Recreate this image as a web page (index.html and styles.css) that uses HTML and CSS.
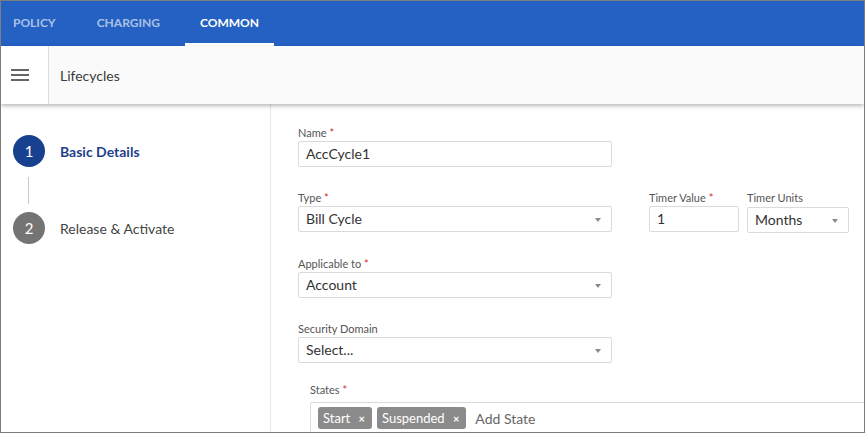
FILE: index.html
```html
<!DOCTYPE html>
<html>
<head>
<meta charset="utf-8">
<link rel="stylesheet" href="styles.css">
</head>
<body>
<div class="frame">
  <header class="topbar">
    <nav class="tabs">
      <div class="tab tab-first">POLICY</div>
      <div class="tab">CHARGING</div>
      <div class="tab active">COMMON</div>
    </nav>
  </header>
  <div class="subbar">
    <div class="menu-btn">
      <span></span><span></span><span></span>
    </div>
    <div class="page-title">Lifecycles</div>
  </div>
  <div class="main">
    <aside class="steps">
      <div class="step">
        <div class="circle current">1</div>
        <div class="step-label current">Basic Details</div>
      </div>
      <div class="connector"></div>
      <div class="step">
        <div class="circle">2</div>
        <div class="step-label">Release &amp; Activate</div>
      </div>
    </aside>
    <section class="form">
      <div class="field w-main">
        <label class="lbl">Name <span class="req">*</span></label>
        <div class="input">AccCycle1</div>
      </div>
      <div class="row">
        <div class="field w-main">
          <label class="lbl">Type <span class="req">*</span></label>
          <div class="input select">Bill Cycle<i class="caret"></i></div>
        </div>
        <div class="field w-timer">
          <label class="lbl">Timer Value <span class="req">*</span></label>
          <div class="input">1</div>
        </div>
        <div class="field w-units">
          <label class="lbl">Timer Units</label>
          <div class="input select units">Months<i class="caret"></i></div>
        </div>
      </div>
      <div class="field w-main">
        <label class="lbl">Applicable to <span class="req">*</span></label>
        <div class="input select">Account<i class="caret"></i></div>
      </div>
      <div class="field w-main">
        <label class="lbl">Security Domain</label>
        <div class="input select">Select...<i class="caret"></i></div>
      </div>
      <div class="field states">
        <label class="lbl">States <span class="req">*</span></label>
        <div class="tags-input">
          <span class="chip">Start <b class="x">×</b></span>
          <span class="chip">Suspended <b class="x">×</b></span>
          <span class="placeholder">Add State</span>
        </div>
      </div>
    </section>
  </div>
</div>
</body>
</html>
```

FILE: styles.css
```css
* { box-sizing: border-box; }
html, body { margin: 0; padding: 0; background: #fff; }
body { font-family: Lato, "Noto Sans", sans-serif; color: #333; }

.frame {
  width: 865px;
  height: 433px;
  border: 1px solid #7d7d7d;
  overflow: hidden;
  display: flex;
  flex-direction: column;
  background: #fff;
}

.topbar {
  height: 45px;
  flex: none;
  background: #2461c2;
}
.tabs { display: flex; height: 100%; }
.tab {
  padding: 0 16px;
  height: 100%;
  display: flex;
  align-items: center;
  font-size: 12px;
  font-weight: 700;
  color: rgba(255,255,255,0.62);
  border-bottom: 3px solid transparent;
  margin-right: 9px;
}
.tab-first { padding-left: 12px; }
.tab.active { color: #fff; border-bottom-color: #fff; padding: 0 15px; }

.subbar {
  height: 58px;
  flex: none;
  display: flex;
  background: #fafafa;
  box-shadow: 0 2px 4px rgba(0,0,0,0.28);
  position: relative;
  z-index: 1;
}
.menu-btn {
  width: 48px;
  background: #fff;
  border-right: 1px solid #dcdcdc;
  display: flex;
  flex-direction: column;
  justify-content: center;
  align-items: flex-start;
  gap: 3px;
  padding-left: 10px;
}
.menu-btn span {
  display: block;
  width: 18px;
  height: 2px;
  background: #666;
}
.page-title {
  display: flex;
  align-items: center;
  padding-left: 11px;
  font-size: 14px;
  color: #3a3a3a;
}

.main { flex: 1; display: flex; min-height: 0; }

.steps {
  width: 270px;
  flex: none;
  border-right: 1px solid #e8e8e8;
  padding: 31px 0 0 12px;
}
.step { display: flex; align-items: center; }
.circle {
  width: 32px;
  height: 32px;
  border-radius: 50%;
  background: #747474;
  color: #fff;
  font-size: 15px;
  display: flex;
  align-items: center;
  justify-content: center;
  flex: none;
}
.circle.current { background: #17418f; }
.step-label {
  margin-left: 15px;
  font-size: 14px;
  color: #444;
}
.step-label.current { color: #1f3f8c; font-weight: 700; }
.connector {
  width: 1px;
  height: 27px;
  background: #c8c8c8;
  margin: 10px 0 8px 15px;
}

.form {
  flex: 1;
  padding: 22px 0 0 27px;
  min-width: 0;
}
.row { display: flex; }
.field { margin-bottom: 24px; }
.w-main { width: 314px; }
.w-timer { width: 90px; margin-left: 37px; }
.w-units { width: 102px; margin-left: 8px; }
.lbl {
  display: block;
  height: 15px;
  line-height: 14px;
  font-size: 11px;
  color: #555;
  white-space: nowrap;
}
.req { color: #d0302a; }
.input {
  position: relative;
  height: 26px;
  border: 1px solid #dadada;
  border-radius: 2px;
  padding-left: 7px;
  font-size: 14px;
  line-height: 24px;
  color: #333;
  background: #fff;
}
.input.units { margin-top: 1px; }
.caret {
  position: absolute;
  right: 10px;
  top: 11px;
  width: 0;
  height: 0;
  border-left: 3.5px solid transparent;
  border-right: 3.5px solid transparent;
  border-top: 4px solid #8a8a8a;
}

.states { margin-left: 12px; }
.states .lbl { margin-top: -4px; margin-bottom: 4px; }
.tags-input {
  width: 620px;
  height: 32px;
  border: 1px solid #dadada;
  border-radius: 2px;
  display: flex;
  align-items: center;
  gap: 5px;
  padding: 0 7px;
  font-size: 14px;
}
.chip {
  height: 22px;
  line-height: 22px;
  padding: 0 7px 0 5px;
  border-radius: 3px;
  background: #8b8b8b;
  color: #fff;
  font-size: 13px;
  white-space: nowrap;
}
.chip .x { font-size: 11px; margin-left: 5px; }
.placeholder { color: #666; margin-left: 4px; }
```
